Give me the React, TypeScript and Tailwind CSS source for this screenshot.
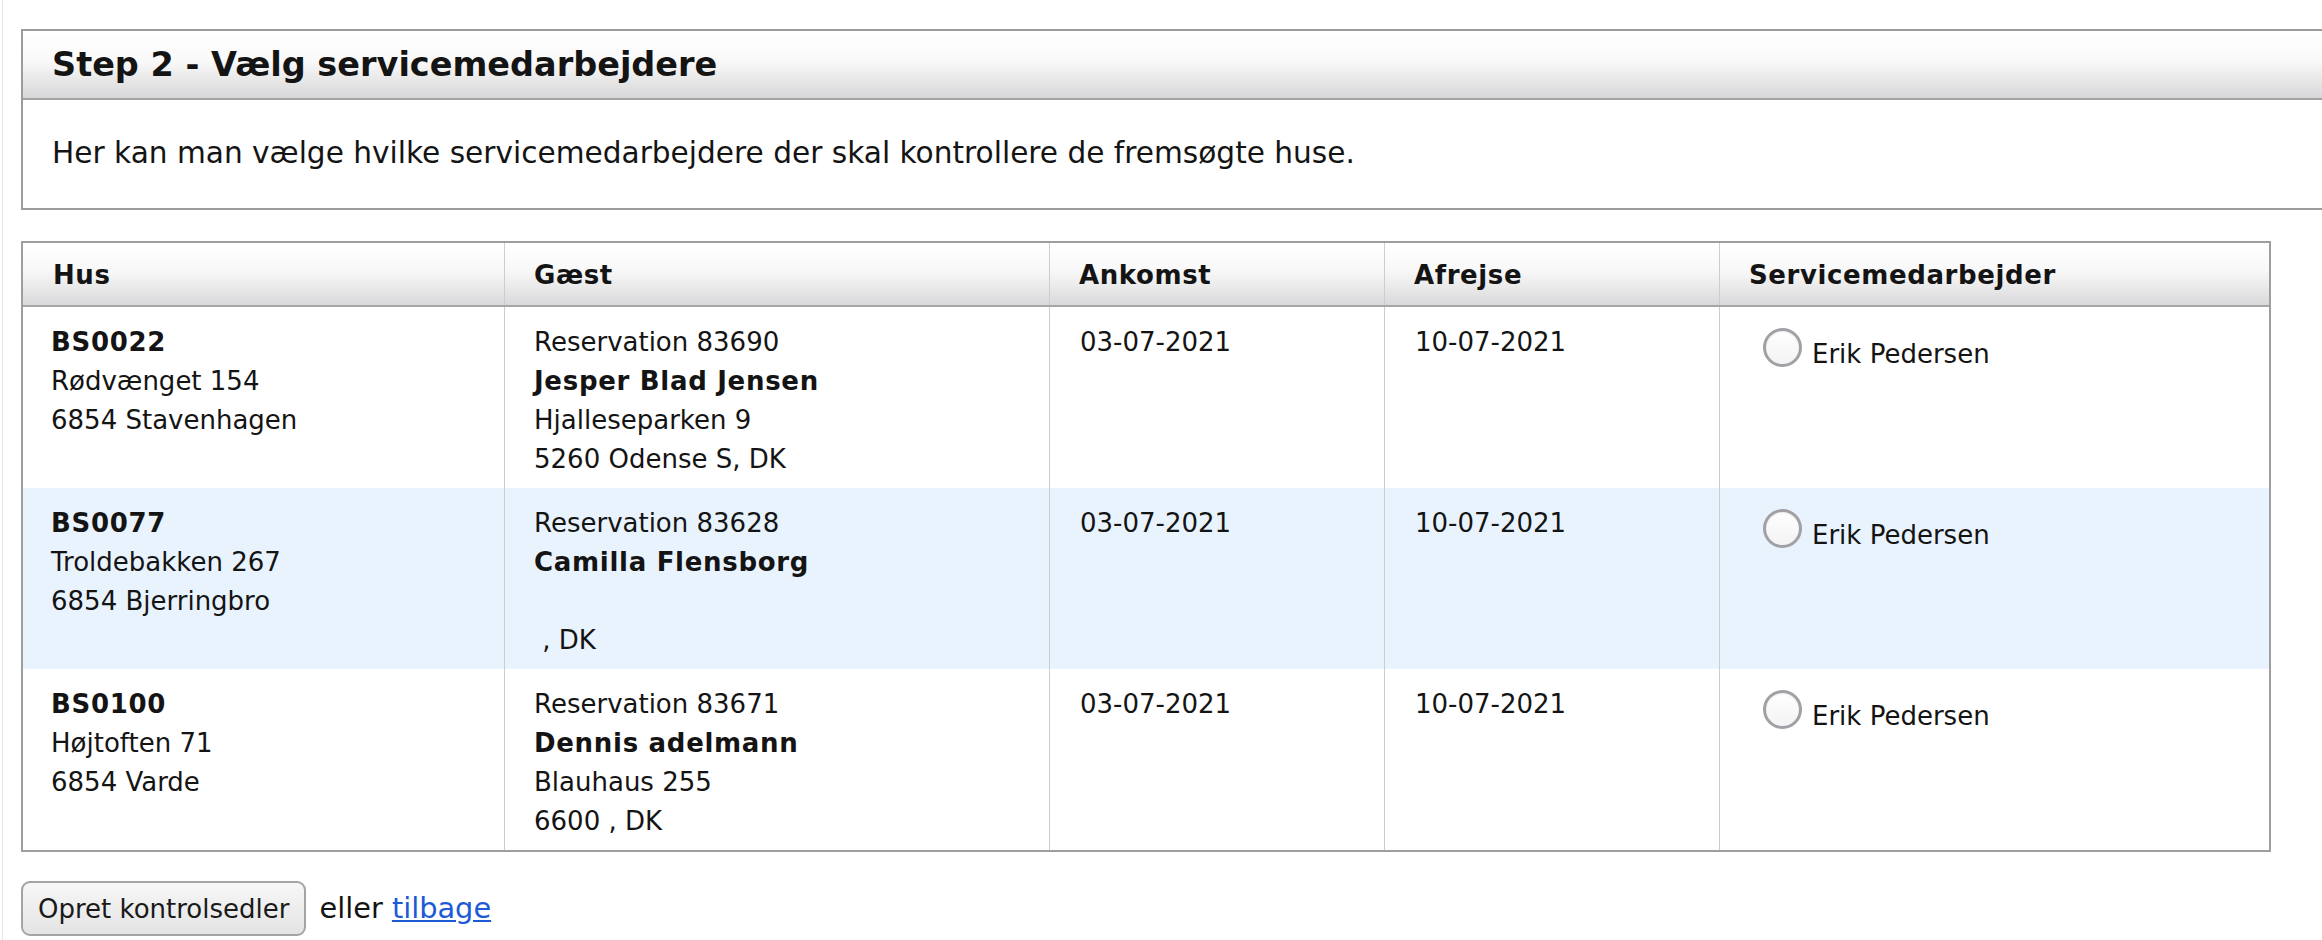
import React from "react";

type Row = {
  hus: string[];
  guest: string[];
  ankomst: string;
  afrejse: string;
  stripe: boolean;
};

const rows: Row[] = [
  {
    hus: ["BS0022", "Rødvænget 154", "6854 Stavenhagen"],
    guest: ["Reservation 83690", "Jesper Blad Jensen", "Hjalleseparken 9", "5260 Odense S, DK"],
    ankomst: "03-07-2021",
    afrejse: "10-07-2021",
    stripe: false,
  },
  {
    hus: ["BS0077", "Troldebakken 267", "6854 Bjerringbro"],
    guest: ["Reservation 83628", "Camilla Flensborg", "\u00a0", "\u00a0, DK"],
    ankomst: "03-07-2021",
    afrejse: "10-07-2021",
    stripe: true,
  },
  {
    hus: ["BS0100", "Højtoften 71", "6854 Varde"],
    guest: ["Reservation 83671", "Dennis adelmann", "Blauhaus 255", "6600 , DK"],
    ankomst: "03-07-2021",
    afrejse: "10-07-2021",
    stripe: false,
  },
];

const cols = "grid grid-cols-[481px_545px_335px_335px_550px]";

function Radio() {
  return (
    <span className="inline-block w-[39px] h-[39px] rounded-full border-[3px] border-[#a0a0a5] bg-[linear-gradient(to_bottom,#ffffff,#f3f3f3)] shadow-[inset_0_1px_2px_rgba(0,0,0,0.08)] shrink-0" />
  );
}

export default function App() {
  return (
    <div className="w-[2322px] h-[940px] overflow-hidden bg-white font-['DejaVu_Sans',Verdana,sans-serif] text-[#141414]">
      <div className="ml-[2px] border-l border-[#e6e6e6] h-full pl-[18px] pt-[29px]">
        {/* Panel */}
        <div className="w-[2320px] border-2 border-[#9c9c9c]">
          <div className="h-[69px] flex items-center pl-[29px] bg-[linear-gradient(to_bottom,#ffffff_0%,#f9f9f9_45%,#d7d7d9_100%)] border-b-2 border-[#a3a3a3]">
            <h2 className="text-[33.5px] font-bold leading-none">Step 2 - Vælg servicemedarbejdere</h2>
          </div>
          <div className="h-[108px] flex items-center pl-[29px]">
            <p className="text-[29.6px] leading-none">
              Her kan man vælge hvilke servicemedarbejdere der skal kontrollere de fremsøgte huse.
            </p>
          </div>
        </div>

        {/* Table */}
        <div className="mt-[31px] w-[2250px] border-2 border-[#9e9e9e] text-[26px] leading-[39px]">
          <div className={`${cols} h-[64px] bg-[linear-gradient(to_bottom,#ffffff_0%,#f8f8f8_45%,#d9d9db_100%)] border-b-2 border-[#a6a6a6] font-bold tracking-[0.6px]`}>
            <div className="flex items-center pl-[30px] pt-[2px]">Hus</div>
            <div className="flex items-center pl-[29px] pt-[2px] border-l border-[#cdcdcd]">Gæst</div>
            <div className="flex items-center pl-[29px] pt-[2px] border-l border-[#cdcdcd]">Ankomst</div>
            <div className="flex items-center pl-[29px] pt-[2px] border-l border-[#cdcdcd]">Afrejse</div>
            <div className="flex items-center pl-[29px] pt-[2px] border-l border-[#cdcdcd]">Servicemedarbejder</div>
          </div>
          {rows.map((r, i) => (
            <div
              key={i}
              className={`${cols} ${r.stripe ? "bg-[#e9f3fd]" : "bg-white"}`}
            >
              <div className="pl-[28px] pt-[16px] pb-[9px] min-h-[181px]">
                {r.hus.map((l, j) => (
                  <div key={j} className={j === 0 ? "font-bold tracking-[0.7px]" : ""}>
                    {l}
                  </div>
                ))}
              </div>
              <div className="pl-[29px] pt-[16px] pb-[9px] border-l border-[#cdcdcd]">
                {r.guest.map((l, j) => (
                  <div key={j} className={j === 1 ? "font-bold tracking-[0.7px]" : ""}>
                    {l}
                  </div>
                ))}
              </div>
              <div className="pl-[30px] pt-[16px] border-l border-[#cdcdcd]">{r.ankomst}</div>
              <div className="pl-[30px] pt-[16px] border-l border-[#cdcdcd]">{r.afrejse}</div>
              <div className="pl-[43px] pt-[21px] border-l border-[#cdcdcd]">
                <label className="flex items-start gap-[10px]">
                  <Radio />
                  <span className="mt-[7px]">Erik Pedersen</span>
                </label>
              </div>
            </div>
          ))}
        </div>

        {/* Footer */}
        <div className="mt-[29px] flex items-center">
          <button className="h-[55px] px-[15px] rounded-[9px] border-2 border-[#a4a4a4] bg-[linear-gradient(to_bottom,#f7f7f7,#e4e4e4)] text-[26px] leading-none text-[#1a1a1a]">
            Opret kontrolsedler
          </button>
          <span className="ml-[13px] text-[28.8px] leading-none">
            eller{" "}
            <a href="#" className="text-[#1c5ad6] underline">
              tilbage
            </a>
          </span>
        </div>
      </div>
    </div>
  );
}
